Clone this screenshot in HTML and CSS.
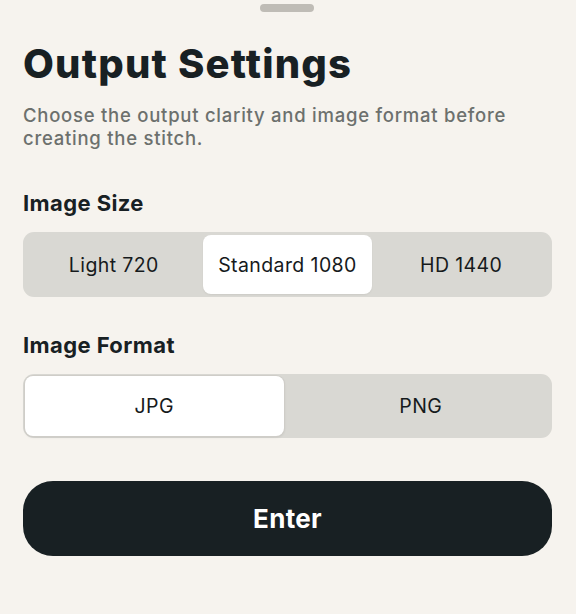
FILE: index.html
```html
<!DOCTYPE html>
<html lang="en">
<head>
<meta charset="utf-8">
<title>Output Settings</title>
<link rel="stylesheet" href="styles.css">
</head>
<body>
<div class="sheet">
  <div class="grabber"></div>
  <h1 class="title">Output Settings</h1>
  <p class="subtitle">Choose the output clarity and image format before creating the stitch.</p>

  <h2 class="section-label">Image Size</h2>
  <div class="segmented three">
    <div class="seg">Light 720</div>
    <div class="seg active">Standard 1080</div>
    <div class="seg">HD 1440</div>
  </div>

  <h2 class="section-label format">Image Format</h2>
  <div class="segmented two">
    <div class="seg active">JPG</div>
    <div class="seg">PNG</div>
  </div>

  <button class="enter">Enter</button>
</div>
</body>
</html>
```
FILE: styles.css
```css
html, body {
  margin: 0;
  padding: 0;
  background: #f6f3ee;
}
body {
  font-family: Inter, "Noto Sans", "Liberation Sans", sans-serif;
  color: #182023;
}
.sheet {
  display: flex;
  flex-direction: column;
  padding: 4px 24px 0 23px;
}
.grabber {
  align-self: center;
  width: 54px;
  height: 8px;
  border-radius: 4px;
  background: #bfbcb6;
  margin-left: -1px;
}
.title {
  margin: 28px 0 0;
  font-size: 40px;
  line-height: 47px;
  font-weight: 800;
  letter-spacing: 1.2px;
  color: #182023;
}
.subtitle {
  margin: 17px 0 0;
  font-size: 18.5px;
  line-height: 22.5px;
  font-weight: 500;
  color: #6c706d;
  letter-spacing: 0.75px;
}
.section-label {
  margin: 41px 0 0;
  font-size: 22px;
  line-height: 26px;
  font-weight: 700;
  letter-spacing: 0.4px;
  color: #182023;
}
.section-label.format {
  margin-top: 35px;
}
.segmented {
  margin-top: 16px;
  display: grid;
  background: #d9d8d3;
  border-radius: 11px;
}
.segmented.three {
  grid-template-columns: repeat(3, 1fr);
  height: 65px;
  padding: 3px 4px;
  box-sizing: border-box;
}
.segmented.two {
  grid-template-columns: 1fr 1fr;
  column-gap: 8px;
  height: 64px;
  padding: 2px 2px;
  box-sizing: border-box;
  margin-top: 16px;
}
.seg {
  display: flex;
  align-items: center;
  justify-content: center;
  font-size: 19.5px;
  font-weight: 400;
  letter-spacing: 0.4px;
  color: #161a1c;
  border-radius: 8px;
}
.segmented.three .seg.active {
  background: #ffffff;
  margin: 0 2px;
  box-shadow: 0 1px 2px rgba(0,0,0,0.06);
}
.segmented.two .seg.active {
  background: #ffffff;
  box-shadow: 0 0 0 1px #cfcdc8, 0 1px 3px rgba(0,0,0,0.12);
}
.enter {
  margin-top: 43px;
  height: 75px;
  border: none;
  border-radius: 30px;
  background: #182023;
  color: #ffffff;
  font-family: Inter, "Noto Sans", "Liberation Sans", sans-serif;
  font-size: 26px;
  font-weight: 700;
  letter-spacing: 0.3px;
  padding: 0;
}
```
